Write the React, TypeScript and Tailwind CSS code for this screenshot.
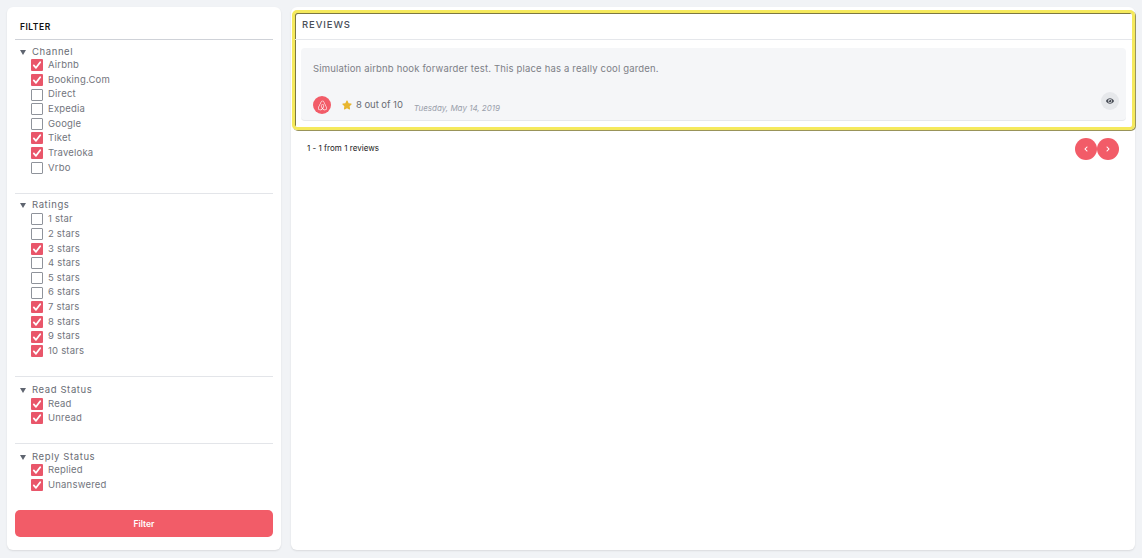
import React from "react";
import { FaAirbnb, FaEye, FaStar, FaChevronLeft, FaChevronRight } from "react-icons/fa";

type Item = [string, boolean];
const sections: { title: string; items: Item[]; titleCls: string; listCls: string; endCls: string }[] = [
  {
    title: "Channel",
    titleCls: "mt-[6px]",
    listCls: "-mt-[1px]",
    endCls: "h-[18px]",
    items: [["Airbnb", true], ["Booking.Com", true], ["Direct", false], ["Expedia", false], ["Google", false], ["Tiket", true], ["Traveloka", true], ["Vrbo", false]],
  },
  {
    title: "Ratings",
    titleCls: "mt-[5px]",
    listCls: "mt-0",
    endCls: "h-[17px]",
    items: [["1 star", false], ["2 stars", false], ["3 stars", true], ["4 stars", false], ["5 stars", false], ["6 stars", false], ["7 stars", true], ["8 stars", true], ["9 stars", true], ["10 stars", true]],
  },
  {
    title: "Read Status",
    titleCls: "mt-[7px]",
    listCls: "mt-0",
    endCls: "h-[17px]",
    items: [["Read", true], ["Unread", true]],
  },
  {
    title: "Reply Status",
    titleCls: "mt-[7px]",
    listCls: "-mt-[1px]",
    endCls: "h-[18px]",
    items: [["Replied", true], ["Unanswered", true]],
  },
];

function Check({ on }: { on: boolean }) {
  return on ? (
    <span className="w-[12px] h-[12px] rounded-[1px] bg-[#e9566a] flex items-center justify-center shrink-0">
      <svg width="10" height="10" viewBox="0 0 10 10" fill="none" stroke="#fff" strokeWidth="1.8" strokeLinecap="round" strokeLinejoin="round">
        <path d="M1.8 5.4 L4 7.8 L8.2 2.2" />
      </svg>
    </span>
  ) : (
    <span className="w-[12px] h-[12px] rounded-[1px] border border-[#8f939b] bg-white shrink-0" />
  );
}

export default function App() {
  return (
    <div className="h-[558px] w-[1142px] overflow-hidden bg-[#f1f3f6] flex gap-[10px] p-[7px_7px_8px_7px] font-['Inter','Open_Sans',sans-serif]">
      <aside className="w-[274px] bg-white rounded-[6px] shadow-[0_1px_2px_rgba(0,0,0,0.1)] px-[8px] flex flex-col">
        <h2 className="h-[32px] pt-[15px] pl-[5px] text-[8.5px] leading-[11px] font-semibold tracking-[0.5px] text-[#111]">FILTER</h2>
        <div className="border-t border-[#cfd2d8]" />
        {sections.map((s, i) => (
          <section key={s.title} className={i > 0 ? "border-t border-[#e3e5e9]" : ""}>
            <div className={`${s.titleCls} flex items-center h-[13px] pl-[5px] gap-[6px] text-[9.5px] tracking-[0.6px] text-[#696c74]`}>
              <span className="w-0 h-0 border-x-[3.5px] border-x-transparent border-t-[5px] border-t-[#5f6570]" />
              <span>{s.title}</span>
            </div>
            <ul className={`ml-[16px] ${s.listCls}`}>
              {s.items.map(([label, on]) => (
                <li key={label} className="flex items-center h-[14.65px] gap-[5px] text-[9.5px] tracking-[0.2px] text-[#72757d]">
                  <Check on={on} />
                  <span>{label}</span>
                </li>
              ))}
            </ul>
            <div className={s.endCls} />
          </section>
        ))}
        <button className="mt-auto mb-[13px] h-[27px] rounded-[5px] bg-[#f25c68] text-white text-[8.5px] font-semibold pt-[1px]">Filter</button>
      </aside>

      <main className="flex-1 bg-white rounded-[6px] shadow-[0_1px_2px_rgba(0,0,0,0.1)] pt-[3px] pl-[1px]">
        <div className="h-[120px] w-[843px] rounded-[5px] border-[3px] border-[#f5e95c] shadow-[inset_1px_1px_0_#7d7840,1px_1px_0_#99945a] flex flex-col">
          <div className="h-[27px] shrink-0 border-b border-[#e5e7eb] pl-[7px] pt-[6px] text-[9.5px] leading-[12px] font-medium tracking-[0.9px] text-[#4a4f58]">REVIEWS</div>
          <article className="relative mt-[8px] mx-[6px] h-[73px] rounded-[4px] bg-[#f5f6f8] border-b border-[#e6e8ec] pl-[12px] pt-[15px]">
            <p className="text-[9.5px] leading-[12px] tracking-[0.17px] text-[#7d8087]">Simulation airbnb hook forwarder test. This place has a really cool garden.</p>
            <div className="mt-[21px] flex items-center h-[18px]">
              <span className="w-[18px] h-[18px] rounded-full bg-[#f25c68] flex items-center justify-center text-white">
                <FaAirbnb size={11} />
              </span>
              <FaStar size={10} className="ml-[11px] text-[#e8b62f]" />
              <span className="ml-[4px] text-[9.5px] tracking-[-0.05px] text-[#696c74]">8 out of 10</span>
              <span className="ml-[11px] mt-[6px] text-[8px] italic text-[#9aa0ab]">Tuesday, May 14, 2019</span>
            </div>
            <span className="absolute right-[7px] bottom-[10px] w-[18px] h-[18px] rounded-full bg-[#e6e8eb] flex items-center justify-center text-[#4a4f58]">
              <FaEye size={8} />
            </span>
          </article>
        </div>
        <div className="flex items-center justify-between mt-[8px] pl-[15px] pr-[16px]">
          <span className="text-[8px] tracking-[0.03px] text-[#222] -mt-[2px]">1 - 1 from 1 reviews</span>
          <div className="flex">
            <button className="w-[22px] h-[22px] rounded-full bg-[#f25c68] text-white flex items-center justify-center"><FaChevronLeft size={6} /></button>
            <button className="w-[22px] h-[22px] rounded-full bg-[#f25c68] text-white flex items-center justify-center"><FaChevronRight size={6} /></button>
          </div>
        </div>
      </main>
    </div>
  );
}
